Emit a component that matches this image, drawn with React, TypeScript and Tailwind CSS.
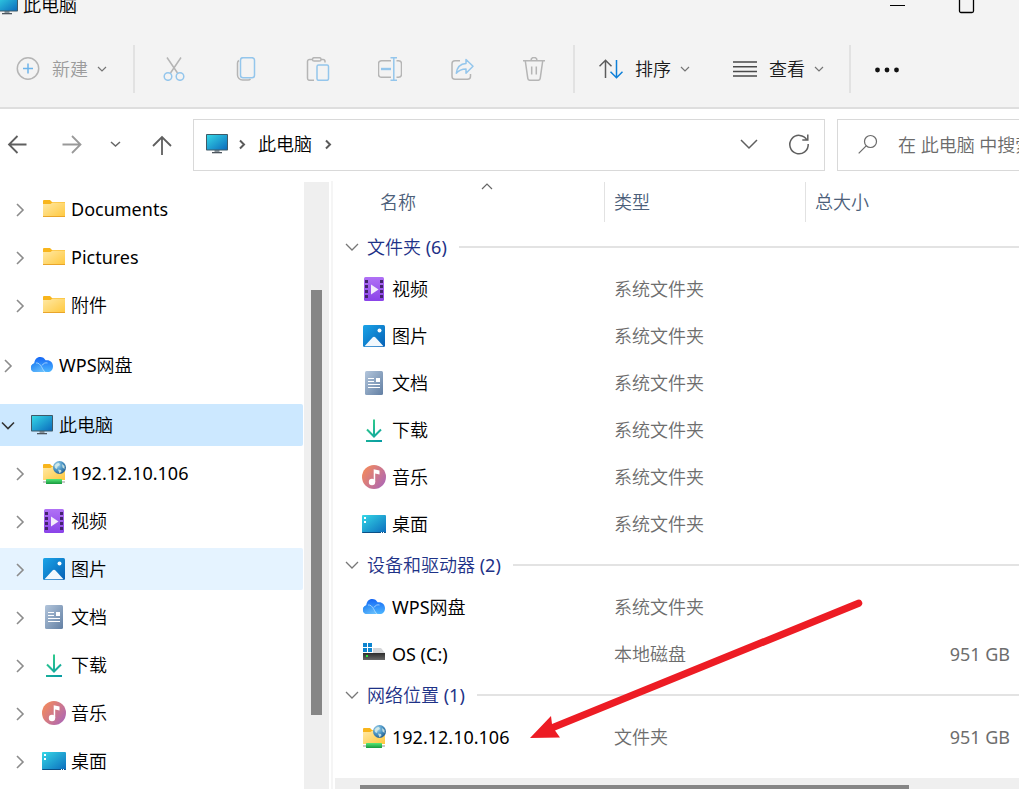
import type { ReactNode } from "react";

type IconName =
  | "folder"
  | "cloud"
  | "pc"
  | "ftp"
  | "video"
  | "picture"
  | "document"
  | "download"
  | "music"
  | "desktop"
  | "drive";

type TreeItem = {
  label: string;
  icon: IconName;
  level: 1 | 2;
  state?: "selected" | "hover";
};

type FileItem = { name: string; icon: IconName; type: string; size?: string };

const tree: TreeItem[] = [
  { label: "Documents", icon: "folder", level: 2 },
  { label: "Pictures", icon: "folder", level: 2 },
  { label: "附件", icon: "folder", level: 2 },
  { label: "WPS网盘", icon: "cloud", level: 1 },
  { label: "此电脑", icon: "pc", level: 1, state: "selected" },
  { label: "192.12.10.106", icon: "ftp", level: 2 },
  { label: "视频", icon: "video", level: 2 },
  { label: "图片", icon: "picture", level: 2, state: "hover" },
  { label: "文档", icon: "document", level: 2 },
  { label: "下载", icon: "download", level: 2 },
  { label: "音乐", icon: "music", level: 2 },
  { label: "桌面", icon: "desktop", level: 2 },
];

const groups: { title: string; items: FileItem[] }[] = [
  {
    title: "文件夹 (6)",
    items: [
      { name: "视频", icon: "video", type: "系统文件夹" },
      { name: "图片", icon: "picture", type: "系统文件夹" },
      { name: "文档", icon: "document", type: "系统文件夹" },
      { name: "下载", icon: "download", type: "系统文件夹" },
      { name: "音乐", icon: "music", type: "系统文件夹" },
      { name: "桌面", icon: "desktop", type: "系统文件夹" },
    ],
  },
  {
    title: "设备和驱动器 (2)",
    items: [
      { name: "WPS网盘", icon: "cloud", type: "系统文件夹" },
      { name: "OS (C:)", icon: "drive", type: "本地磁盘", size: "951 GB" },
    ],
  },
  {
    title: "网络位置 (1)",
    items: [{ name: "192.12.10.106", icon: "ftp", type: "文件夹", size: "951 GB" }],
  },
];

// Gradients are declared once and shared by every icon on the page
function Gradients() {
  return (
    <svg className="absolute h-0 w-0" aria-hidden="true">
      <defs>
        <linearGradient id="g-folder" x1="0" y1="0" x2="1" y2="1">
          <stop offset="0" stopColor="#ffe9a6" />
          <stop offset="1" stopColor="#ffc83d" />
        </linearGradient>
        <linearGradient id="g-screen" x1="0" y1="0" x2="1" y2="1">
          <stop offset="0" stopColor="#35d7e6" />
          <stop offset="1" stopColor="#0b6cbd" />
        </linearGradient>
        <linearGradient id="g-video" x1="0" y1="0" x2="0" y2="1">
          <stop offset="0" stopColor="#b071f5" />
          <stop offset="1" stopColor="#8a43e8" />
        </linearGradient>
        <linearGradient id="g-picture" x1="0" y1="0" x2="1" y2="1">
          <stop offset="0" stopColor="#1ba4e8" />
          <stop offset="1" stopColor="#0660b5" />
        </linearGradient>
        <linearGradient id="g-doc" x1="0" y1="0" x2="1" y2="1">
          <stop offset="0" stopColor="#b3c6dc" />
          <stop offset="1" stopColor="#627fa3" />
        </linearGradient>
        <linearGradient id="g-download" gradientUnits="userSpaceOnUse" x1="4" y1="2" x2="20" y2="24">
          <stop offset="0" stopColor="#37d388" />
          <stop offset="1" stopColor="#069aa5" />
        </linearGradient>
        <linearGradient id="g-music" x1="0" y1="0.2" x2="1" y2="0.9">
          <stop offset="0" stopColor="#f48a5b" />
          <stop offset="1" stopColor="#a965ba" />
        </linearGradient>
        <linearGradient id="g-cloud" x1="0" y1="0" x2="0" y2="1">
          <stop offset="0" stopColor="#1567f5" />
          <stop offset="1" stopColor="#4db6ff" />
        </linearGradient>
        <linearGradient id="g-cloud-front" x1="0" y1="0" x2="1" y2="1">
          <stop offset="0" stopColor="#1d80f2" />
          <stop offset="1" stopColor="#77cbff" />
        </linearGradient>
        <radialGradient id="g-globe" cx="0.35" cy="0.3" r="0.8">
          <stop offset="0" stopColor="#a9d8ee" />
          <stop offset="0.5" stopColor="#4a94c4" />
          <stop offset="1" stopColor="#1f5684" />
        </radialGradient>
        <linearGradient id="g-green" x1="0" y1="0" x2="0" y2="1">
          <stop offset="0" stopColor="#56e878" />
          <stop offset="1" stopColor="#17983d" />
        </linearGradient>
        <linearGradient id="g-drive" x1="0" y1="0" x2="0" y2="1">
          <stop offset="0" stopColor="#2c2c2c" />
          <stop offset="1" stopColor="#686868" />
        </linearGradient>
      </defs>
    </svg>
  );
}

const art: Record<IconName, ReactNode> = {
  folder: (
    <>
      <path d="M1 4a1 1 0 0 1 1-1h6l2 2h13v3H1z" fill="#f8b51c" />
      <path d="M1 7h7.500l2-1.500H23V20H1z" fill="url(#g-folder)" />
      <path d="M1 19h22v1H1z" fill="#e9a52a" />
    </>
  ),
  cloud: (
    <>
      <path
        d="M5 19a4.200 4.200 0 0 1-.800-8.300C4.500 6.700 6.800 4 10.200 4c2.500 0 4.300 1.200 5.400 3.300 4.200-.800 7.400 2 7.400 5.900S20.700 19 18 19z"
        fill="url(#g-cloud)"
      />
      <path d="M1 15c0-3 2.200-5 5-5 4.500 0 6.200 8.300 11 9H5c-2.300 0-4-1.600-4-4z" fill="url(#g-cloud-front)" />
      <path d="M6 10c5-.800 6.500 7.500 9 9M12 12.500c1.500-2.500 3.500-3 5.500-2.500" fill="none" stroke="#b6deff" strokeWidth="0.800" />
    </>
  ),
  pc: (
    <>
      <path d="M9.500 18h5v2h-5z" fill="#8b949b" />
      <path d="M7 20h10v1.300H7z" fill="#4d565e" />
      <rect x="1" y="2" width="22" height="16.500" rx="0.800" fill="#3f5a68" />
      <rect x="2" y="3" width="20" height="14.500" fill="url(#g-screen)" />
    </>
  ),
  ftp: (
    <>
      <path d="M1 4a1 1 0 0 1 1-1h6l2 2h13v3H1z" fill="#f8b51c" />
      <path d="M1 7h7.500l2-1.500H23V19H1z" fill="url(#g-folder)" />
      <path d="M1 20h22v2H1z" fill="#c9c9c9" />
      <rect x="4" y="18" width="16" height="5" rx="0.500" fill="url(#g-green)" />
      <circle cx="17.500" cy="6.500" r="6.500" fill="url(#g-globe)" />
      <path
        d="M12.500 4.500c1.500-2 3-2.800 4.500-2.500l1 2-2.500 1.500-.500 2.500-2-1zM16 8.500l3 .500.500 1.500-2 2zM20 3l2.500 2v3l-2-1.500z"
        fill="#dff0e8"
        opacity="0.800"
      />
    </>
  ),
  video: (
    <>
      <rect x="2" y="0" width="20" height="24" rx="1.500" fill="url(#g-video)" />
      <path
        d="M3 3h3v3H3zM3 8h3v3H3zM3 13h3v3H3zM3 18h3v3H3zM18 3h3v3h-3zM18 8h3v3h-3zM18 13h3v3h-3zM18 18h3v3h-3z"
        fill="#43246e"
      />
      <path d="M9 7.500v10l7.500-5z" fill="#f3ecfb" />
    </>
  ),
  picture: (
    <>
      <rect x="1" y="1" width="22" height="22" rx="1.500" fill="url(#g-picture)" />
      <path d="M2.500 22.200 10.500 13.500a2 2 0 0 1 3 0l8 8.700z" fill="#f2f8fd" />
      <circle cx="17.500" cy="6.500" r="2" fill="#fff" />
    </>
  ),
  document: (
    <>
      <rect x="3" y="0" width="18" height="24" rx="1.500" fill="url(#g-doc)" />
      <path d="M6 7.500h6M6 10.500h6M6 13.500h12M6 16.500h12" stroke="#fff" strokeWidth="1.200" />
      <rect x="14" y="7" width="4" height="4" fill="#fff" />
    </>
  ),
  download: (
    <g fill="none" stroke="url(#g-download)" strokeWidth="2">
      <path d="M12.010 1.500 12 18.500M5 11.500l7 7 7-7" />
      <path d="M4 23.010 20 23" />
    </g>
  ),
  music: (
    <>
      <circle cx="12" cy="12" r="12" fill="url(#g-music)" />
      <circle cx="10" cy="17" r="3.200" fill="#fff" />
      <path d="M11.700 4.200 17.500 5.500v4l-4.300-1v8.500h-1.500z" fill="#fff" />
    </>
  ),
  desktop: (
    <>
      <rect x="0" y="3" width="24" height="18" rx="1" fill="url(#g-screen)" />
      <path d="M0 20h24a1 1 0 0 1-1 1H1a1 1 0 0 1-1-1z" fill="#0b4f86" />
      <path d="M2 5h2v2H2zM2 9h2v2H2zM19 20h1v1h-1zM21 20h1v1h-1z" fill="#fff" />
    </>
  ),
  drive: (
    <>
      <path d="M4 6h15l4 5H1z" fill="#d5d6d8" />
      <rect x="1" y="11" width="22" height="7" fill="url(#g-drive)" />
      <rect x="4" y="13" width="2" height="2" fill="#2fe63c" />
      <path d="M0 0h11v11H0z" fill="#fff" />
      <path d="M1 1h4v4H1zM6 1h4v4H6zM1 6h4v4H1zM6 6h4v4H6z" fill="#0d84cf" />
    </>
  ),
};

function Icon({ name }: { name: IconName }) {
  return (
    <svg viewBox="0 0 24 24" className="h-6 w-6 shrink-0" aria-hidden="true">
      {art[name]}
    </svg>
  );
}

function Line({ children, className = "" }: { children: ReactNode; className?: string }) {
  return (
    <svg
      viewBox="0 0 24 24"
      className={`h-6 w-6 shrink-0 ${className}`}
      fill="none"
      stroke="currentColor"
      strokeWidth="1.500"
      aria-hidden="true"
    >
      {children}
    </svg>
  );
}

function SmallChevron({ className = "" }: { className?: string }) {
  return (
    <svg
      viewBox="0 0 12 12"
      className={`h-3 w-3 shrink-0 ${className}`}
      fill="none"
      stroke="currentColor"
      strokeWidth="1.200"
      aria-hidden="true"
    >
      <path d="m2 4 4 4 4-4" />
    </svg>
  );
}

const GRAY = "#b5b5b5";
const BLUE = "#94c6ec";

const actions: { label: string; drawing: ReactNode }[] = [
  {
    label: "剪切",
    drawing: (
      <>
        <path d="m5 .500 10.500 15.500M19 .500 8.500 16" stroke={GRAY} />
        <circle cx="6" cy="19.500" r="3.800" stroke={BLUE} />
        <circle cx="18" cy="19.500" r="3.800" stroke={BLUE} />
      </>
    ),
  },
  {
    label: "复制",
    drawing: (
      <>
        <path d="M5 3.500a3 3 0 0 0-1.500 2.500V18a5 5 0 0 0 5 5H14a3 3 0 0 0 2.500-1" stroke={GRAY} />
        <rect x="6.500" y="0.700" width="14" height="20" rx="2.500" stroke={BLUE} />
      </>
    ),
  },
  {
    label: "粘贴",
    drawing: (
      <>
        <path d="M7 2.500H3.500a2 2 0 0 0-2 2v16.800a2 2 0 0 0 2 2H8M15 2.500h2a2 2 0 0 1 2 2v1" stroke={GRAY} />
        <rect x="6.500" y="0.700" width="8.500" height="3.300" rx="1.600" stroke={GRAY} />
        <rect x="11" y="8" width="11.500" height="15.300" rx="1.500" stroke={BLUE} />
      </>
    ),
  },
  {
    label: "重命名",
    drawing: (
      <>
        <path d="M13 3.700H3.500a3 3 0 0 0-3 3v10.600a3 3 0 0 0 3 3H13M18.500 3.700h2a3 3 0 0 1 3 3v10.600a3 3 0 0 1-3 3h-2" stroke={GRAY} />
        <path d="M12.500.700h6.500M12.500 23.300h6.500M15.800.700v22.600" stroke={BLUE} />
        <path d="M3 12h10" stroke={BLUE} strokeWidth="2.400" />
      </>
    ),
  },
  {
    label: "共享",
    drawing: (
      <>
        <path d="M10 3.700H5a3 3 0 0 0-3 3v12.600a3 3 0 0 0 3 3h12.500a3 3 0 0 0 3-3v-2.300" stroke={GRAY} />
        <path
          d="M16 2.500v4c-5.500.300-9 4-9.700 9.800 3-3.600 6-4.300 9.700-4.300v4.200l7-7z"
          stroke={BLUE}
          strokeLinejoin="round"
        />
      </>
    ),
  },
  {
    label: "删除",
    drawing: (
      <path
        d="M1 3.800h22M3.300 4l2.500 17.300a2.300 2.300 0 0 0 2.200 2h8a2.300 2.300 0 0 0 2.200-2L20.700 4M9 3.500a3 3 0 0 1 6 0M9.700 9.500v8M14.300 9.500v8"
        stroke={GRAY}
      />
    ),
  },
];

function TitleBar() {
  return (
    <header className="flex h-[17px] items-end overflow-hidden">
      <div className="-ml-[5px] flex flex-1 items-center gap-1">
        <Icon name="pc" />
        <h1 className="leading-6">此电脑</h1>
      </div>
      <button aria-label="最小化" className="mr-[45px]">
        <svg viewBox="0 0 24 24" className="h-6 w-6" aria-hidden="true">
          <path d="M4 12h15v1H4z" />
        </svg>
      </button>
      <button aria-label="最大化" className="mr-10">
        <svg viewBox="0 0 24 24" className="h-6 w-6" fill="none" stroke="currentColor" aria-hidden="true">
          <rect x="4.500" y="4.500" width="14" height="15" rx="1.500" strokeWidth="1.300" />
        </svg>
      </button>
    </header>
  );
}

function Divider({ className }: { className: string }) {
  return <div className={`h-12 w-[2px] shrink-0 bg-[#e2e2e2] ${className}`} />;
}

function Toolbar() {
  return (
    <div role="toolbar" className="flex items-center border-b-2 border-[#dedede] pt-7 pb-[14px]">
      <button className="ml-4 flex items-center gap-2 text-[#9b9b9b]">
        <Line className="mr-1">
          <circle cx="12" cy="11.500" r="10.700" stroke={GRAY} />
          <path d="M12 6.500v10M7 11.500h10" stroke="#6db4ea" />
        </Line>
        新建
        <SmallChevron className="text-[#757575]" />
      </button>
      <Divider className="ml-[25px] mr-[3px]" />
      {actions.map((a) => (
        <button key={a.label} aria-label={a.label} className="flex w-[72px] shrink-0 justify-center">
          <Line>{a.drawing}</Line>
        </button>
      ))}
      <Divider className="ml-[3px] mr-6" />
      <button className="mr-[42px] flex items-center gap-2 text-[#1b1b1b]">
        <Line className="mr-1">
          <path d="M6.500 21V3M.500 9.200l6-6 6 6" stroke="#5c5c5c" />
          <path d="M17.500 3v18M11.500 14.800l6 6 6-6" stroke="#0d7fd8" />
        </Line>
        排序
        <SmallChevron className="text-[#757575]" />
      </button>
      <button className="flex items-center gap-2 text-[#1b1b1b]">
        <Line className="mr-1">
          <path d="M0 5h24M0 9.700h24M0 14.400h24M0 19.100h24" stroke="#4a4a4a" />
        </Line>
        查看
        <SmallChevron className="text-[#757575]" />
      </button>
      <Divider className="mx-6" />
      <button aria-label="更多">
        <svg viewBox="0 0 24 24" className="h-6 w-6" fill="#111" aria-hidden="true">
          <circle cx="2.500" cy="13" r="2.400" />
          <circle cx="12" cy="13" r="2.400" />
          <circle cx="21.500" cy="13" r="2.400" />
        </svg>
      </button>
    </div>
  );
}

function Crumb() {
  return (
    <svg
      viewBox="0 0 12 12"
      className="h-3 w-3 shrink-0 text-[#5a5a5a]"
      fill="none"
      stroke="currentColor"
      strokeWidth="2"
      aria-hidden="true"
    >
      <path d="m4 2.500 4 4-4 4" />
    </svg>
  );
}

function AddressBar() {
  return (
    <nav className="flex h-[72px] items-center bg-white">
      <button aria-label="后退" className="ml-[5px] text-[#5f5f5f]">
        <Line>
          <path d="M21.500 11.500H4.500M12.500 3 4 11.500 12.500 20" strokeWidth="1.800" />
        </Line>
      </button>
      <button aria-label="前进" className="ml-[30px] text-[#999]">
        <Line>
          <path d="M3.500 11.500H21M13 3l8.500 8.500L13 20" strokeWidth="1.800" />
        </Line>
      </button>
      <button aria-label="最近位置" className="ml-5 text-[#666]">
        <Line>
          <path d="m8 9 4.500 4L17 9" />
        </Line>
      </button>
      <button aria-label="向上" className="ml-[23px] text-[#5f5f5f]">
        <Line>
          <path d="M12 22V4M3 13l9-9 9 9" strokeWidth="1.800" />
        </Line>
      </button>
      <div className="ml-[19px] flex h-[52px] min-w-0 flex-1 items-center border border-[#d9d9d9] pr-[13px] pb-[2px] pl-[11px]">
        <Icon name="pc" />
        <div className="ml-[7px] flex flex-1 items-center gap-[10px]">
          <Crumb />
          <a href="#pc">此电脑</a>
          <Crumb />
        </div>
        <button aria-label="历史记录" className="mr-[26px] text-[#5f5f5f]">
          <Line>
            <path d="m4 8 8 8 8-8" />
          </Line>
        </button>
        <button aria-label="刷新" className="text-[#5f5f5f]">
          <Line>
            <path d="M20 8a9.200 9.200 0 1 0 1.200 4M20.800 2.500V8h-5.500" />
          </Line>
        </button>
      </div>
      <label className="ml-3 flex h-[52px] w-[182px] shrink-0 items-center gap-[18px] border border-r-0 border-[#d9d9d9] pl-[18px] text-[#6b6b6b]">
        <Line>
          <circle cx="14.500" cy="8.500" r="6" strokeWidth="1.200" />
          <path d="m10.200 12.800-7.500 7.500" strokeWidth="1.200" />
        </Line>
        <input
          type="text"
          aria-label="搜索"
          placeholder="在 此电脑 中搜索"
          className="w-0 flex-1 bg-transparent outline-none placeholder:text-[#6b6b6b]"
        />
      </label>
    </nav>
  );
}

function TreeRow({ item }: { item: TreeItem }) {
  const selected = item.state === "selected";
  const bg = selected ? "bg-[#cce8ff]" : item.state === "hover" ? "bg-[#e5f3ff]" : "";
  const indent = item.level === 1 ? "" : "pl-3";
  const space = item.level === 1 && !selected ? "my-3" : "";
  return (
    <li className={space}>
      <button className={`flex h-[42px] w-full items-center rounded-r-[2px] text-left ${bg} ${indent}`}>
        <svg
          viewBox="0 0 16 16"
          className={`mr-[14px] h-4 w-4 shrink-0 ${selected ? "text-[#333]" : "text-[#8c8c8c]"}`}
          fill="none"
          stroke="currentColor"
          strokeWidth="1.600"
          aria-hidden="true"
        >
          {selected ? <path d="m2 5.500 6 6 6-6" /> : <path d="m5 3 6 6-6 6" />}
        </svg>
        <Icon name={item.icon} />
        <span className="ml-[5px]">{item.label}</span>
      </button>
    </li>
  );
}

function Sidebar() {
  return (
    <aside className="flex w-[333px] shrink-0">
      <ul className="flex min-w-0 flex-1 flex-col gap-[6px] pt-[7px] pr-px">
        {tree.map((item) => (
          <TreeRow key={item.label} item={item} />
        ))}
      </ul>
      <div className="mt-px w-[25px] bg-[#efefef]">
        <div className="mx-auto mt-[108px] h-[425px] w-[11px] bg-[#868686]" />
      </div>
      <div className="ml-[2px] w-[2px] bg-[#f5f5f5]" />
    </aside>
  );
}

function HeadCell({ children, className = "" }: { children: ReactNode; className?: string }) {
  return (
    <th scope="col" className="h-12 p-0 align-top font-normal">
      <div className={`mt-px flex h-10 items-center pl-[9px] ${className}`}>{children}</div>
    </th>
  );
}

function FileTable() {
  return (
    <table className="w-full table-fixed border-collapse text-left">
      <colgroup>
        <col className="w-[272px]" />
        <col className="w-[201px]" />
        <col />
      </colgroup>
      <thead className="text-[#4c607a]">
        <tr>
          <HeadCell className="relative border-r border-[#e2e2e2] pl-[47px]">
            名称
            <svg
              viewBox="0 0 12 8"
              className="absolute top-0 left-[148px] h-2 w-3"
              fill="none"
              stroke="#666"
              strokeWidth="1.200"
              aria-hidden="true"
            >
              <path d="m1 7 5-5 5 5" />
            </svg>
          </HeadCell>
          <HeadCell className="border-r border-[#e2e2e2]">类型</HeadCell>
          <HeadCell>总大小</HeadCell>
        </tr>
      </thead>
      {groups.map((group) => (
        <tbody key={group.title}>
          <tr>
            <th colSpan={3} scope="rowgroup" className="h-9 p-0 font-normal">
              <div className="flex items-center">
                <button className="ml-3 flex items-center gap-[6px] text-[#1e3287]">
                  <svg
                    viewBox="0 0 16 16"
                    className="h-4 w-4 text-[#777]"
                    fill="none"
                    stroke="currentColor"
                    strokeWidth="1.300"
                    aria-hidden="true"
                  >
                    <path d="m1 5 6 6 6-6" />
                  </svg>
                  {group.title}
                </button>
                <div className="ml-3 h-[2px] flex-1 bg-[#e3e3e3]" />
              </div>
            </th>
          </tr>
          {group.items.map((item) => (
            <tr key={item.name}>
              <td className="h-[47px] p-0">
                <div className="flex items-center gap-[6px] pl-[29px]">
                  <Icon name={item.icon} />
                  {item.name}
                </div>
              </td>
              <td className="p-0 pl-[9px] text-[#6d6d6d]">{item.type}</td>
              <td className="p-0 pr-[9px] text-right text-[#6d6d6d]">{item.size}</td>
            </tr>
          ))}
        </tbody>
      ))}
    </table>
  );
}

// Hand-drawn style marker pointing at the network location
function Marker() {
  return (
    <svg
      viewBox="0 0 340 144"
      className="pointer-events-none absolute top-[417px] left-[193px] h-[144px] w-[340px]"
      fill="#ed1c24"
      aria-hidden="true"
    >
      <path d="M4 140 25 118l1 8L331.600 1.800a3.600 3.600 0 0 1 2.800 6.600L29 132.500l5 7z" />
    </svg>
  );
}

export default function App() {
  return (
    <div className="flex min-h-screen flex-col overflow-hidden bg-[#f3f3f3] font-['Noto_Sans','Noto_Sans_CJK_SC_DemiLight','Noto_Sans_CJK_SC',sans-serif] text-[18px] leading-6 text-black">
      <Gradients />
      <TitleBar />
      <Toolbar />
      <AddressBar />
      <div className="flex flex-1 bg-white">
        <Sidebar />
        <main className="relative flex min-w-0 flex-1 flex-col">
          <FileTable />
          <div className="mt-auto ml-[2px] h-[11px] bg-[#efefef] pt-[7px] pl-[25px]">
            <div className="h-1 w-5/6 bg-[#868686]" />
          </div>
          <Marker />
        </main>
      </div>
    </div>
  );
}
